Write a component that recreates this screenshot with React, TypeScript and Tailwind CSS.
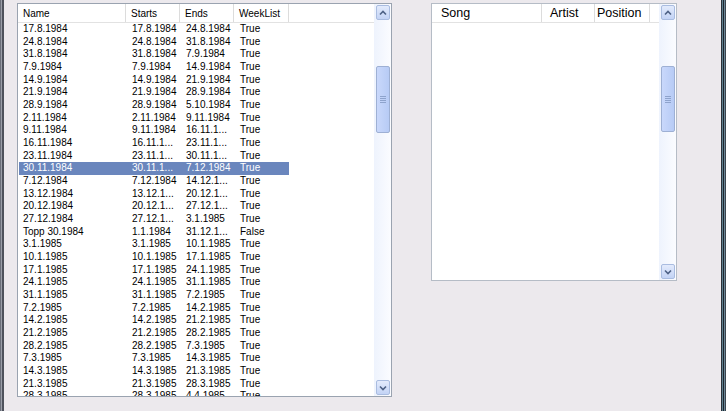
import React from "react";

const rows: [string, string, string, string][] = [
  ["17.8.1984", "17.8.1984", "24.8.1984", "True"],
  ["24.8.1984", "24.8.1984", "31.8.1984", "True"],
  ["31.8.1984", "31.8.1984", "7.9.1984", "True"],
  ["7.9.1984", "7.9.1984", "14.9.1984", "True"],
  ["14.9.1984", "14.9.1984", "21.9.1984", "True"],
  ["21.9.1984", "21.9.1984", "28.9.1984", "True"],
  ["28.9.1984", "28.9.1984", "5.10.1984", "True"],
  ["2.11.1984", "2.11.1984", "9.11.1984", "True"],
  ["9.11.1984", "9.11.1984", "16.11.1...", "True"],
  ["16.11.1984", "16.11.1...", "23.11.1...", "True"],
  ["23.11.1984", "23.11.1...", "30.11.1...", "True"],
  ["30.11.1984", "30.11.1...", "7.12.1984", "True"],
  ["7.12.1984", "7.12.1984", "14.12.1...", "True"],
  ["13.12.1984", "13.12.1...", "20.12.1...", "True"],
  ["20.12.1984", "20.12.1...", "27.12.1...", "True"],
  ["27.12.1984", "27.12.1...", "3.1.1985", "True"],
  ["Topp 30.1984", "1.1.1984", "31.12.1...", "False"],
  ["3.1.1985", "3.1.1985", "10.1.1985", "True"],
  ["10.1.1985", "10.1.1985", "17.1.1985", "True"],
  ["17.1.1985", "17.1.1985", "24.1.1985", "True"],
  ["24.1.1985", "24.1.1985", "31.1.1985", "True"],
  ["31.1.1985", "31.1.1985", "7.2.1985", "True"],
  ["7.2.1985", "7.2.1985", "14.2.1985", "True"],
  ["14.2.1985", "14.2.1985", "21.2.1985", "True"],
  ["21.2.1985", "21.2.1985", "28.2.1985", "True"],
  ["28.2.1985", "28.2.1985", "7.3.1985", "True"],
  ["7.3.1985", "7.3.1985", "14.3.1985", "True"],
  ["14.3.1985", "14.3.1985", "21.3.1985", "True"],
  ["21.3.1985", "21.3.1985", "28.3.1985", "True"],
  ["28.3.1985", "28.3.1985", "4.4.1985", "True"],
];

function ArrowBtn({ up }: { up?: boolean }) {
  return (
    <div className="mx-auto flex h-[15px] w-[14px] items-center justify-center rounded-[2px] border border-[#a9bce0] bg-linear-to-b from-[#e3ebfc] to-[#c3d3f5]">
      <svg width="8" height="6" viewBox="0 0 8 6">
        {up ? (
          <path d="M1 4.5 L4 1.5 L7 4.5" fill="none" stroke="#4d6185" strokeWidth="1.6" />
        ) : (
          <path d="M1 1.5 L4 4.5 L7 1.5" fill="none" stroke="#4d6185" strokeWidth="1.6" />
        )}
      </svg>
    </div>
  );
}

function ScrollBar({ thumbTop, thumbH }: { thumbTop: number; thumbH: number }) {
  return (
    <div className="flex h-full w-[17px] flex-col bg-linear-to-r from-[#eef3fd] to-[#fbfcff] py-[1px]">
      <ArrowBtn up />
      <div className="flex-1">
        <div
          className="mx-auto flex w-[14px] items-center justify-center rounded-[2px] border border-[#9eb0d4] bg-linear-to-r from-[#c9d8fb] to-[#b7cbf5]"
          style={{ marginTop: thumbTop, height: thumbH }}
        >
          <div className="flex flex-col gap-[1px]">
            <div className="h-[1px] w-[6px] bg-[#8ea3cc]" />
            <div className="h-[1px] w-[6px] bg-[#8ea3cc]" />
            <div className="h-[1px] w-[6px] bg-[#8ea3cc]" />
            <div className="h-[1px] w-[6px] bg-[#8ea3cc]" />
          </div>
        </div>
      </div>
      <ArrowBtn />
    </div>
  );
}

function HeadCell({ w, text, cls }: { w: number; text: string; cls?: string }) {
  return (
    <div
      className={"flex h-full shrink-0 items-center border-r border-[#dcdcdc] " + (cls ?? "")}
      style={{ width: w }}
    >
      {text}
    </div>
  );
}

export default function App() {
  return (
    <div
      className="flex h-[411px] w-[726px] overflow-hidden bg-[#ece9ed] text-black"
      style={{ fontFamily: '"Liberation Sans", Arial, sans-serif' }}
    >
      <div className="flex h-full w-[4px] shrink-0">
        <div className="w-[1px] bg-[#6b6f7a]" />
        <div className="w-[1px] bg-[#9a9ea8]" />
        <div className="w-[2px] bg-[#4e525c]" />
      </div>

      <div className="flex flex-1 items-start pl-[13px] pt-[3px]">
        {/* left list */}
        <div className="flex h-[394px] w-[375px] shrink-0 border border-[#9aa3b0] bg-white">
          <div className="flex flex-1 flex-col overflow-hidden">
            <div className="flex h-[19px] shrink-0 border-b border-[#e2e2e2] text-[10px]">
              <HeadCell w={108} text="Name" cls="pl-[5px]" />
              <HeadCell w={54} text="Starts" cls="pl-[5px]" />
              <HeadCell w={54} text="Ends" cls="pl-[5px]" />
              <HeadCell w={55} text="WeekList" cls="pl-[5px]" />
            </div>
            <div className="flex-1 overflow-hidden text-[10px]">
              {rows.map((r, i) => {
                const sel = i === 11;
                return (
                  <div
                    key={i}
                    className={
                      "ml-[1px] flex h-[12.68px] w-[270px] items-center leading-[12.68px] " +
                      (sel ? "bg-[#6a86bd] text-white" : "")
                    }
                  >
                    <div className="w-[107px] shrink-0 pl-[4px]">{r[0]}</div>
                    <div className="w-[54px] shrink-0 pl-[6px] whitespace-nowrap">{r[1]}</div>
                    <div className="w-[54px] shrink-0 pl-[6px] whitespace-nowrap">{r[2]}</div>
                    <div className="w-[55px] shrink-0 pl-[6px]">{r[3]}</div>
                  </div>
                );
              })}
            </div>
          </div>
          <ScrollBar thumbTop={46} thumbH={67} />
        </div>

        {/* right list */}
        <div className="ml-[39px] flex h-[278px] w-[246px] shrink-0 border border-[#b5bcc6] bg-white">
          <div className="flex flex-1 flex-col overflow-hidden">
            <div className="flex h-[19px] shrink-0 border-b border-[#e2e2e2] text-[12.5px]">
              <HeadCell w={110} text="Song" cls="pl-[9px]" />
              <HeadCell w={53} text="Artist" cls="pl-[8px]" />
              <HeadCell w={55} text="Position" cls="pl-[2px]" />
            </div>
            <div className="flex-1" />
          </div>
          <ScrollBar thumbTop={46} thumbH={66} />
        </div>
      </div>

      <div className="flex h-full w-[5px] shrink-0">
        <div className="w-[1px] bg-[#2b3038]" />
        <div className="w-[1px] bg-[#5d7f8e]" />
        <div className="w-[1px] bg-[#1f262e]" />
        <div className="w-[1px] bg-[#6a8696]" />
        <div className="w-[1px] bg-[#3a434d]" />
      </div>
    </div>
  );
}
